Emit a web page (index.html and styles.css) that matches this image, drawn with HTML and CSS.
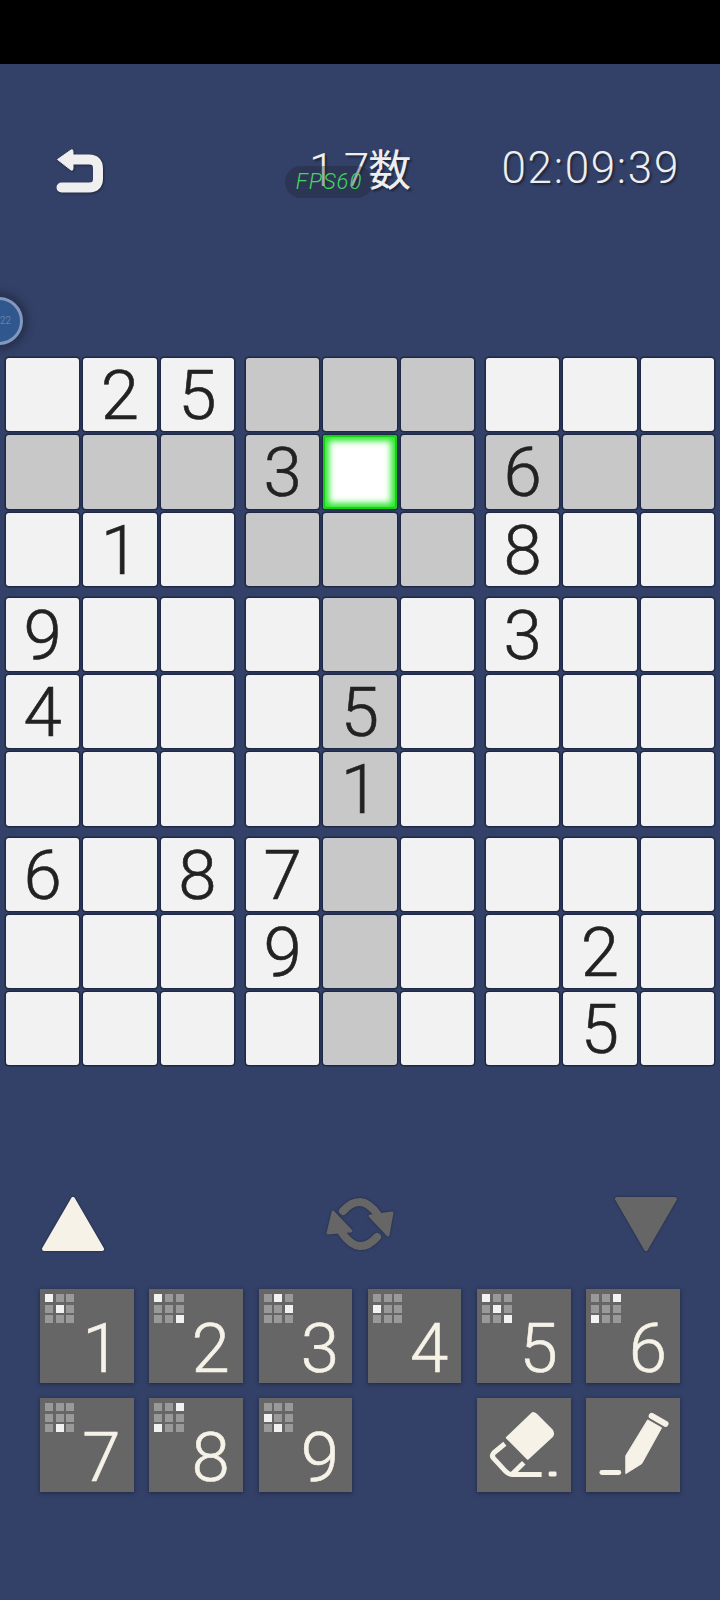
FILE: index.html
```html
<!DOCTYPE html>
<html>
<head>
  <title>Sudoku</title>
  <link rel="stylesheet" href="styles.css">
</head>
<body>
  <div id="statusbar"></div>

  <div id="header">
    <svg class="back" viewBox="0 0 49 44"><path d="M14 10.500H33Q42 10.500 42 19.500V29.500Q42 38.500 33 38.500H5.500" fill="none" stroke="#efefef" stroke-width="10" stroke-linecap="round"/><path d="M1.500 10.500L15 1Q17 0 17 2.500V19.500Q17 22 15 21Z" fill="#efefef" stroke="#efefef" stroke-linejoin="round"/></svg>
    <div class="title">1 7<span class="cjk">数</span></div>
    <div class="timer">02:09:39</div>
    <div class="fps">FPS60</div>
  </div>

  <div class="bubble">22</div>

  <div id="board">
    <div class="block">
      <div class="cell"></div><div class="cell">2</div><div class="cell">5</div>
      <div class="cell hl"></div><div class="cell hl"></div><div class="cell hl"></div>
      <div class="cell"></div><div class="cell">1</div><div class="cell"></div>
    </div>
    <div class="block">
      <div class="cell hl"></div><div class="cell hl"></div><div class="cell hl"></div>
      <div class="cell hl">3</div><div class="cell sel"></div><div class="cell hl"></div>
      <div class="cell hl"></div><div class="cell hl"></div><div class="cell hl"></div>
    </div>
    <div class="block">
      <div class="cell"></div><div class="cell"></div><div class="cell"></div>
      <div class="cell hl">6</div><div class="cell hl"></div><div class="cell hl"></div>
      <div class="cell">8</div><div class="cell"></div><div class="cell"></div>
    </div>
    <div class="block">
      <div class="cell">9</div><div class="cell"></div><div class="cell"></div>
      <div class="cell">4</div><div class="cell"></div><div class="cell"></div>
      <div class="cell"></div><div class="cell"></div><div class="cell"></div>
    </div>
    <div class="block">
      <div class="cell"></div><div class="cell hl"></div><div class="cell"></div>
      <div class="cell"></div><div class="cell hl">5</div><div class="cell"></div>
      <div class="cell"></div><div class="cell hl">1</div><div class="cell"></div>
    </div>
    <div class="block">
      <div class="cell">3</div><div class="cell"></div><div class="cell"></div>
      <div class="cell"></div><div class="cell"></div><div class="cell"></div>
      <div class="cell"></div><div class="cell"></div><div class="cell"></div>
    </div>
    <div class="block">
      <div class="cell">6</div><div class="cell"></div><div class="cell">8</div>
      <div class="cell"></div><div class="cell"></div><div class="cell"></div>
      <div class="cell"></div><div class="cell"></div><div class="cell"></div>
    </div>
    <div class="block">
      <div class="cell">7</div><div class="cell hl"></div><div class="cell"></div>
      <div class="cell">9</div><div class="cell hl"></div><div class="cell"></div>
      <div class="cell"></div><div class="cell hl"></div><div class="cell"></div>
    </div>
    <div class="block">
      <div class="cell"></div><div class="cell"></div><div class="cell"></div>
      <div class="cell"></div><div class="cell">2</div><div class="cell"></div>
      <div class="cell"></div><div class="cell">5</div><div class="cell"></div>
    </div>
  </div>

  <div id="arrows">
    <svg class="tri" viewBox="0 0 66 60"><path d="M33 4L62 54H4Z" fill="#f6f2e8" stroke="#f6f2e8" stroke-width="4" stroke-linejoin="round"/></svg>
    <svg class="sync" viewBox="0 0 68 60">
      <g fill="none" stroke="#666" stroke-width="8"><path d="M17 16Q35 -4 52 20" stroke-linecap="round"/><path d="M51 42Q33 62 16 38" stroke-linecap="round"/></g>
      <path d="M44 21L66 18L62 40Z" fill="#666" stroke="#666" stroke-width="3" stroke-linejoin="round"/>
      <path d="M25 36L2 38L7 17Z" fill="#666" stroke="#666" stroke-width="3" stroke-linejoin="round"/>
    </svg>
    <svg class="tri" viewBox="0 0 66 60"><path d="M3 4H61L32 54Z" fill="#666" stroke="#666" stroke-width="4" stroke-linejoin="round"/></svg>
  </div>

  <div id="keys">
    <div class="key"><div class="mini"><i class="on"></i><i></i><i></i><i></i><i class="on"></i><i></i><i></i><i></i><i></i></div><span class="num">1</span></div>
    <div class="key"><div class="mini"><i class="on"></i><i></i><i></i><i></i><i></i><i></i><i></i><i></i><i class="on"></i></div><span class="num">2</span></div>
    <div class="key"><div class="mini"><i></i><i class="on"></i><i></i><i></i><i></i><i class="on"></i><i></i><i></i><i></i></div><span class="num">3</span></div>
    <div class="key"><div class="mini"><i></i><i></i><i></i><i class="on"></i><i></i><i></i><i></i><i></i><i></i></div><span class="num">4</span></div>
    <div class="key"><div class="mini"><i class="on"></i><i></i><i></i><i></i><i class="on"></i><i></i><i></i><i></i><i class="on"></i></div><span class="num">5</span></div>
    <div class="key"><div class="mini"><i></i><i></i><i class="on"></i><i></i><i></i><i></i><i class="on"></i><i></i><i></i></div><span class="num">6</span></div>
    <div class="key"><div class="mini"><i></i><i></i><i></i><i></i><i></i><i></i><i></i><i class="on"></i><i></i></div><span class="num">7</span></div>
    <div class="key"><div class="mini"><i></i><i></i><i class="on"></i><i></i><i></i><i></i><i class="on"></i><i></i><i></i></div><span class="num">8</span></div>
    <div class="key"><div class="mini"><i></i><i></i><i></i><i class="on"></i><i></i><i></i><i></i><i class="on"></i><i></i></div><span class="num">9</span></div>
    <div class="spacer"></div>
    <div class="key">
      <svg class="tool" viewBox="0 0 94 94">
        <path d="M56 15Q58 15 60 17L75 32Q78 36 75 39L51 61L30 40Z" fill="#f6f2e8" stroke="#f6f2e8" stroke-width="2" stroke-linejoin="round"/>
        <path d="M28 46L17 55Q14 58 17 61L29 74Q32 77 36 77H65" fill="none" stroke="#f6f2e8" stroke-width="5"/>
        <path d="M47 65L36 76" fill="none" stroke="#f6f2e8" stroke-width="5"/>
        <rect x="72" y="74" width="8" height="5" rx="1.500" fill="#f6f2e8"/>
      </svg>
    </div>
    <div class="key">
      <svg class="tool" viewBox="0 0 94 94">
        <path d="M66 18L80 26" fill="none" stroke="#f6f2e8" stroke-width="6" stroke-linecap="round"/>
        <path d="M62 22L76 30L56 66L40 76V58Z" fill="#f6f2e8" stroke="#f6f2e8" stroke-linejoin="round"/>
        <path d="M16 75H33" fill="none" stroke="#f6f2e8" stroke-width="5" stroke-linecap="round"/>
      </svg>
    </div>
  </div>
</body>
</html>
```
FILE: styles.css
```css
*{
  padding: 0;
  margin: 0;
  box-sizing: border-box;
}

body{
  width: 720px;
  height: 1600px;
  overflow: hidden;
  position: relative;
  background-color: #334067;
  font-family: "Roboto", "Liberation Sans", sans-serif;
  font-weight: 300;
}

#statusbar{
  height: 64px;
  background-color: #000;
}

#header{
  position: relative;
  height: 294px;
  padding: 85px 40px 0 56px;
  display: flex;
  align-items: flex-start;
  color: #eee;
}

.back{
  width: 49px;
  height: 44px;
  filter: drop-shadow(1px 1px 1px #1e2740);
}

.title{
  margin-left: 204px;
  margin-top: -1px;
  font-size: 46px;
  line-height: 38px;
  letter-spacing: -1px;
  text-shadow: 2px 2px 2px #1e2740;
  white-space: nowrap;
}

.cjk{
  font-family: "Noto Sans CJK JP", sans-serif;
  font-weight: 400;
  font-size: 43px;
  letter-spacing: 0;
}

.timer{
  margin-left: auto;
  font-size: 44px;
  line-height: 38px;
  letter-spacing: 1.700px;
  text-shadow: 2px 2px 2px #1e2740;
}

.fps{
  position: absolute;
  left: 285px;
  top: 102px;
  width: 88px;
  height: 32px;
  border-radius: 16px;
  background-color: rgba(32,36,50,.35);
  color: #42d662;
  font-style: italic;
  font-weight: 300;
  font-size: 22px;
  line-height: 32px;
  text-align: center;
  letter-spacing: 1px;
}

.bubble{
  position: absolute;
  left: -25px;
  top: 297px;
  width: 48px;
  height: 48px;
  border-radius: 50%;
  border: 3px solid #8298bf;
  background-color: #30588f;
  box-shadow: 0 0 6px 5px rgba(38,46,72,.8);
  color: #7690b6;
  font-size: 10px;
  line-height: 42px;
  text-align: right;
  padding-right: 9px;
}

#board{
  margin-left: 6px;
  display: grid;
  grid-template-columns: repeat(3,228px);
  grid-template-rows: repeat(3,228px);
  column-gap: 12px;
  row-gap: 11.750px;
}

.block{
  display: grid;
  grid-template-columns: repeat(3,73.333px);
  grid-template-rows: repeat(3,73.333px);
  gap: 4px;
}

.cell{
  background-color: #f2f2f2;
  border-radius: 3px;
  box-shadow: 0 0 0 1.500px #1f2945;
  color: #222;
  font-size: 69px;
  line-height: 75px;
  text-align: center;
  -webkit-text-stroke: .6px #222;
}

.hl{
  background-color: #c8c8c8;
}

.sel{
  background-color: #fff;
  box-shadow: 0 0 0 1.500px #1f2945, inset 0 0 0 2px #12d412, inset 0 0 6px 6px #2fe82f;
}

#arrows{
  margin-top: 129px;
  padding: 0 40px;
  height: 60px;
  display: flex;
  justify-content: space-between;
}

.tri{
  width: 66px;
  height: 60px;
  filter: drop-shadow(0 0 1px #1e2740);
}

.sync{
  width: 68px;
  height: 60px;
  filter: drop-shadow(0 0 1px #1e2740);
}

#keys{
  margin-top: 34.500px;
  padding-left: 40px;
  display: grid;
  grid-template-columns: repeat(6,93.500px);
  grid-template-rows: repeat(2,93.500px);
  column-gap: 15.800px;
  row-gap: 15.500px;
}

.key{
  position: relative;
  background-color: #666;
  box-shadow: 0 1px 4px #1e2740;
  display: flex;
  align-items: flex-end;
  justify-content: flex-end;
  padding-right: 13px;
  color: #f6f2e8;
}

.num{
  font-size: 69px;
  line-height: 69px;
  -webkit-text-stroke: .6px #f6f2e8;
}

.mini{
  position: absolute;
  left: 5px;
  top: 5px;
  display: grid;
  grid-template-columns: repeat(3,8px);
  grid-template-rows: repeat(3,8px);
  gap: 2.700px;
}

.mini i{
  background-color: #999;
}

.mini .on{
  background-color: #f2f2f2;
}

.tool{
  position: absolute;
  left: 0;
  top: 0;
  width: 100%;
  height: 100%;
}
```
